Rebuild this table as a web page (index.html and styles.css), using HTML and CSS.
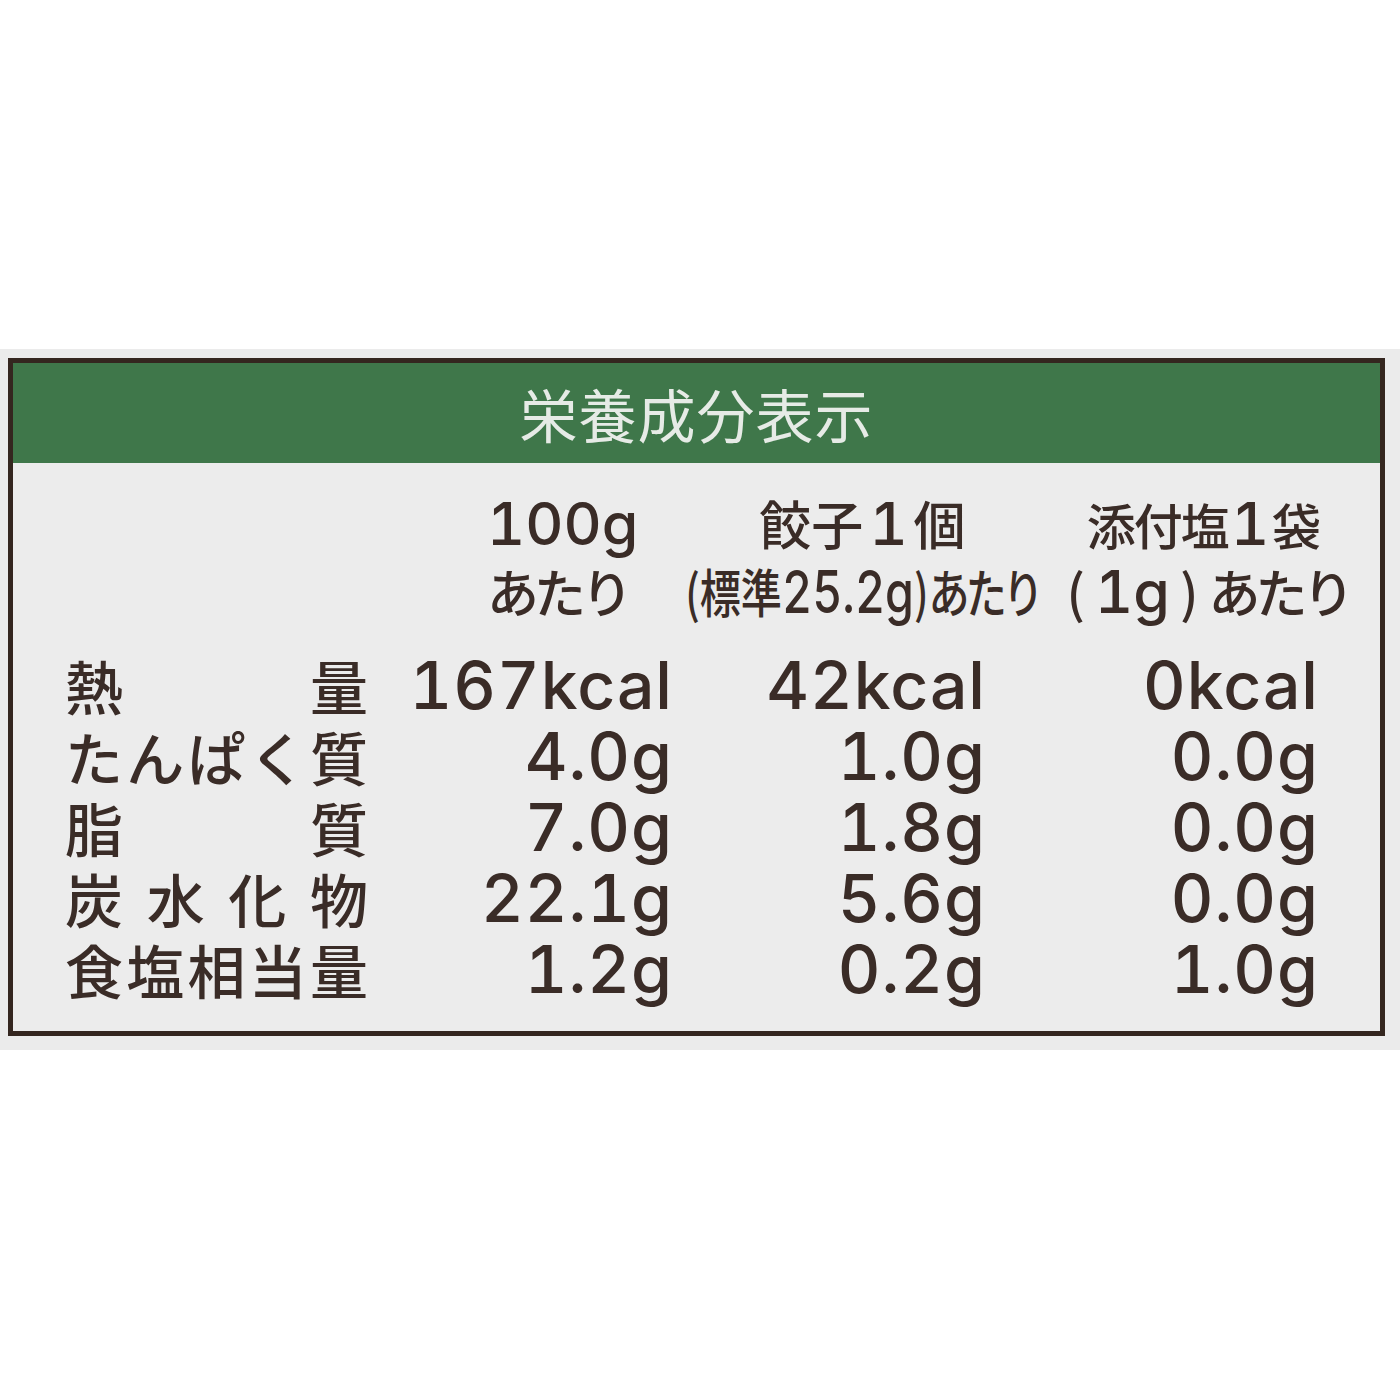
FILE: index.html
```html
<!DOCTYPE html>
<html lang="ja">
<head>
<meta charset="utf-8">
<title>栄養成分表示</title>
<link rel="stylesheet" href="styles.css">
</head>
<body>
<div class="panel">
  <div class="label">
    <div class="title">栄養成分表示</div>
    <div class="cols">
      <div class="col c1">
        <div class="ln"><span class="n">100g</span></div>
        <div class="ln kana">あたり</div>
      </div>
      <div class="col c2">
        <div class="ln"><span class="k">餃子</span><span class="n one">1</span><span class="k">個</span></div>
        <div class="ln"><span class="cond">(<span class="k">標準</span><span class="n">25.2g</span>)<span class="kana">あたり</span></span></div>
      </div>
      <div class="col c3">
        <div class="ln"><span class="k tight">添付塩</span><span class="n one small">1</span><span class="k tight">袋</span></div>
        <div class="ln"><span class="par">(</span><span class="n">1g</span><span class="par">)</span><span class="kana">あたり</span></div>
      </div>
    </div>
    <div class="rows">
      <div class="row">
        <div class="lab"><span>熱</span><span>量</span></div>
        <div class="v">167kcal</div><div class="v">42kcal</div><div class="v">0kcal</div>
      </div>
      <div class="row">
        <div class="lab"><span>た</span><span>ん</span><span>ぱ</span><span>く</span><span>質</span></div>
        <div class="v">4.0g</div><div class="v">1.0g</div><div class="v">0.0g</div>
      </div>
      <div class="row">
        <div class="lab"><span>脂</span><span>質</span></div>
        <div class="v">7.0g</div><div class="v">1.8g</div><div class="v">0.0g</div>
      </div>
      <div class="row">
        <div class="lab"><span>炭</span><span>水</span><span>化</span><span>物</span></div>
        <div class="v">22.1g</div><div class="v">5.6g</div><div class="v">0.0g</div>
      </div>
      <div class="row">
        <div class="lab"><span>食</span><span>塩</span><span>相</span><span>当</span><span>量</span></div>
        <div class="v">1.2g</div><div class="v">0.2g</div><div class="v">1.0g</div>
      </div>
    </div>
  </div>
</div>
</body>
</html>
```
FILE: styles.css
```css
html, body {
  margin: 0;
  padding: 0;
  background: #ffffff;
}
body {
  width: 1400px;
  height: 1400px;
  font-family: "Noto Sans CJK JP", "Noto Sans", sans-serif;
  font-weight: 500;
  color: #3a2c27;
}
.panel {
  margin-top: 349px;
  padding: 9px 15px 14px 8px;
  background: #ebebeb;
}
.label {
  border: 5px solid #34261f;
  background: #ececec;
}
.title {
  height: 100px;
  background: #3f774a;
  color: #e6ebe6;
  font-size: 58px;
  font-weight: 400;
  letter-spacing: 1px;
  line-height: 100px;
  text-align: center;
}
.cols {
  display: grid;
  grid-template-columns: 185px 381px 300px;
  padding: 26px 0 0 474px;
  height: 162px;
  box-sizing: border-box;
}
.col {
  display: flex;
  flex-direction: column;
  align-items: center;
  font-size: 52px;
}
.c1 { align-items: flex-start; }
.ln {
  height: 68px;
  line-height: 68px;
  white-space: nowrap;
}
.n {
  font-family: Inter, "Noto Sans CJK JP", sans-serif;
  font-variant-numeric: tabular-nums;
  font-size: 59px;
  letter-spacing: 0;
}
.n.one {
  margin: 0 6px;
}
.n.one.small {
  margin: 0 3px;
}
.k.tight {
  font-size: 49px;
  letter-spacing: -2px;
}
.kana {
  letter-spacing: -5px;
}
.cond {
  display: inline-block;
  transform: scaleX(0.79);
  transform-origin: center;
}
.par {
  margin: 0 10px;
}
.rows {
  padding: 25px 0 26px 52px;
}
.row {
  display: grid;
  grid-template-columns: 303px 304px 313px 333px;
  height: 71px;
  line-height: 71px;
}
.lab {
  display: flex;
  justify-content: space-between;
  font-size: 58px;
}
.v {
  font-family: Inter, "Noto Sans CJK JP", sans-serif;
  font-variant-numeric: tabular-nums;
  text-align: right;
  font-size: 66px;
  letter-spacing: 1px;
  margin-right: -1px;
  white-space: nowrap;
}
```
